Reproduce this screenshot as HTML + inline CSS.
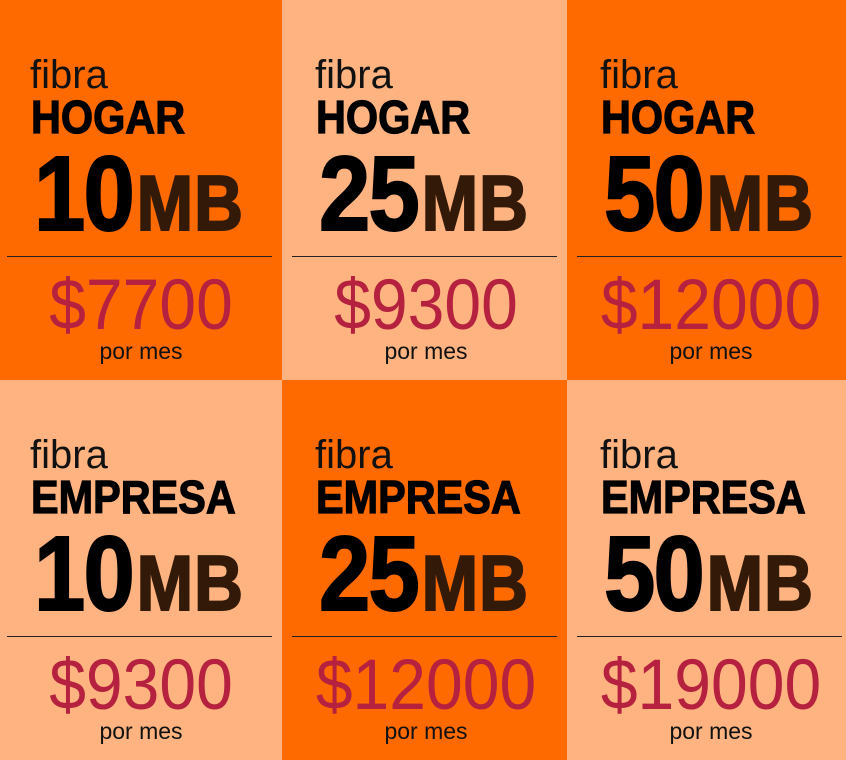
<!DOCTYPE html>
<html><head><meta charset="utf-8"><style>
*{margin:0;padding:0;box-sizing:border-box}
body{width:846px;height:760px;position:relative;overflow:hidden;font-family:"Liberation Sans",sans-serif;background:#ffb380}
.bg{position:absolute;height:380px}
.o{background:#ff6a00}.p{background:#ffb380}
.c{position:absolute;width:282px;height:380px}
.c div{position:absolute;white-space:nowrap;line-height:1}
.f{left:30px;top:55px;font-size:40px;color:#111}
.t{left:31px;top:94px;font-size:46px;font-weight:bold;color:#000;transform:scaleX(.9);transform-origin:left;-webkit-text-stroke:1.2px #000}
.n{left:34px;top:141px;font-size:106px;font-weight:bold;color:#000;transform:scaleX(.87);transform-origin:left;letter-spacing:-2px;-webkit-text-stroke:2px #000}
.n span{font-size:78px;color:#331a08;letter-spacing:1px;-webkit-text-stroke:2px #331a08;margin-left:4px}
.l{left:7px;top:256px;width:265px;height:1px;background:#222}
.pr{left:0;width:282px;text-align:center;top:270px;font-size:71px;color:#b5213f;transform:scaleX(.93)}
.pm{left:0;width:282px;text-align:center;top:340px;font-size:23px;color:#111}
</style></head><body>
<div class="bg o" style="left:0;top:0;width:282px"></div>
<div class="bg p" style="left:282px;top:0;width:285px"></div>
<div class="bg o" style="left:567px;top:0;width:279px"></div>
<div class="bg p" style="left:0;top:380px;width:282px"></div>
<div class="bg o" style="left:282px;top:380px;width:285px"></div>
<div class="bg p" style="left:567px;top:380px;width:279px"></div>

<div class="c" style="left:0;top:0"><div class="f">fibra</div><div class="t">HOGAR</div><div class="n">10<span>MB</span></div><div class="l"></div><div class="pr">$7700</div><div class="pm">por mes</div></div>
<div class="c" style="left:285px;top:0"><div class="f">fibra</div><div class="t">HOGAR</div><div class="n">25<span>MB</span></div><div class="l"></div><div class="pr">$9300</div><div class="pm">por mes</div></div>
<div class="c" style="left:570px;top:0"><div class="f">fibra</div><div class="t">HOGAR</div><div class="n">50<span>MB</span></div><div class="l"></div><div class="pr">$12000</div><div class="pm">por mes</div></div>
<div class="c" style="left:0;top:380px"><div class="f">fibra</div><div class="t">EMPRESA</div><div class="n">10<span>MB</span></div><div class="l"></div><div class="pr">$9300</div><div class="pm">por mes</div></div>
<div class="c" style="left:285px;top:380px"><div class="f">fibra</div><div class="t">EMPRESA</div><div class="n">25<span>MB</span></div><div class="l"></div><div class="pr">$12000</div><div class="pm">por mes</div></div>
<div class="c" style="left:570px;top:380px"><div class="f">fibra</div><div class="t">EMPRESA</div><div class="n">50<span>MB</span></div><div class="l"></div><div class="pr">$19000</div><div class="pm">por mes</div></div>
</body></html>
